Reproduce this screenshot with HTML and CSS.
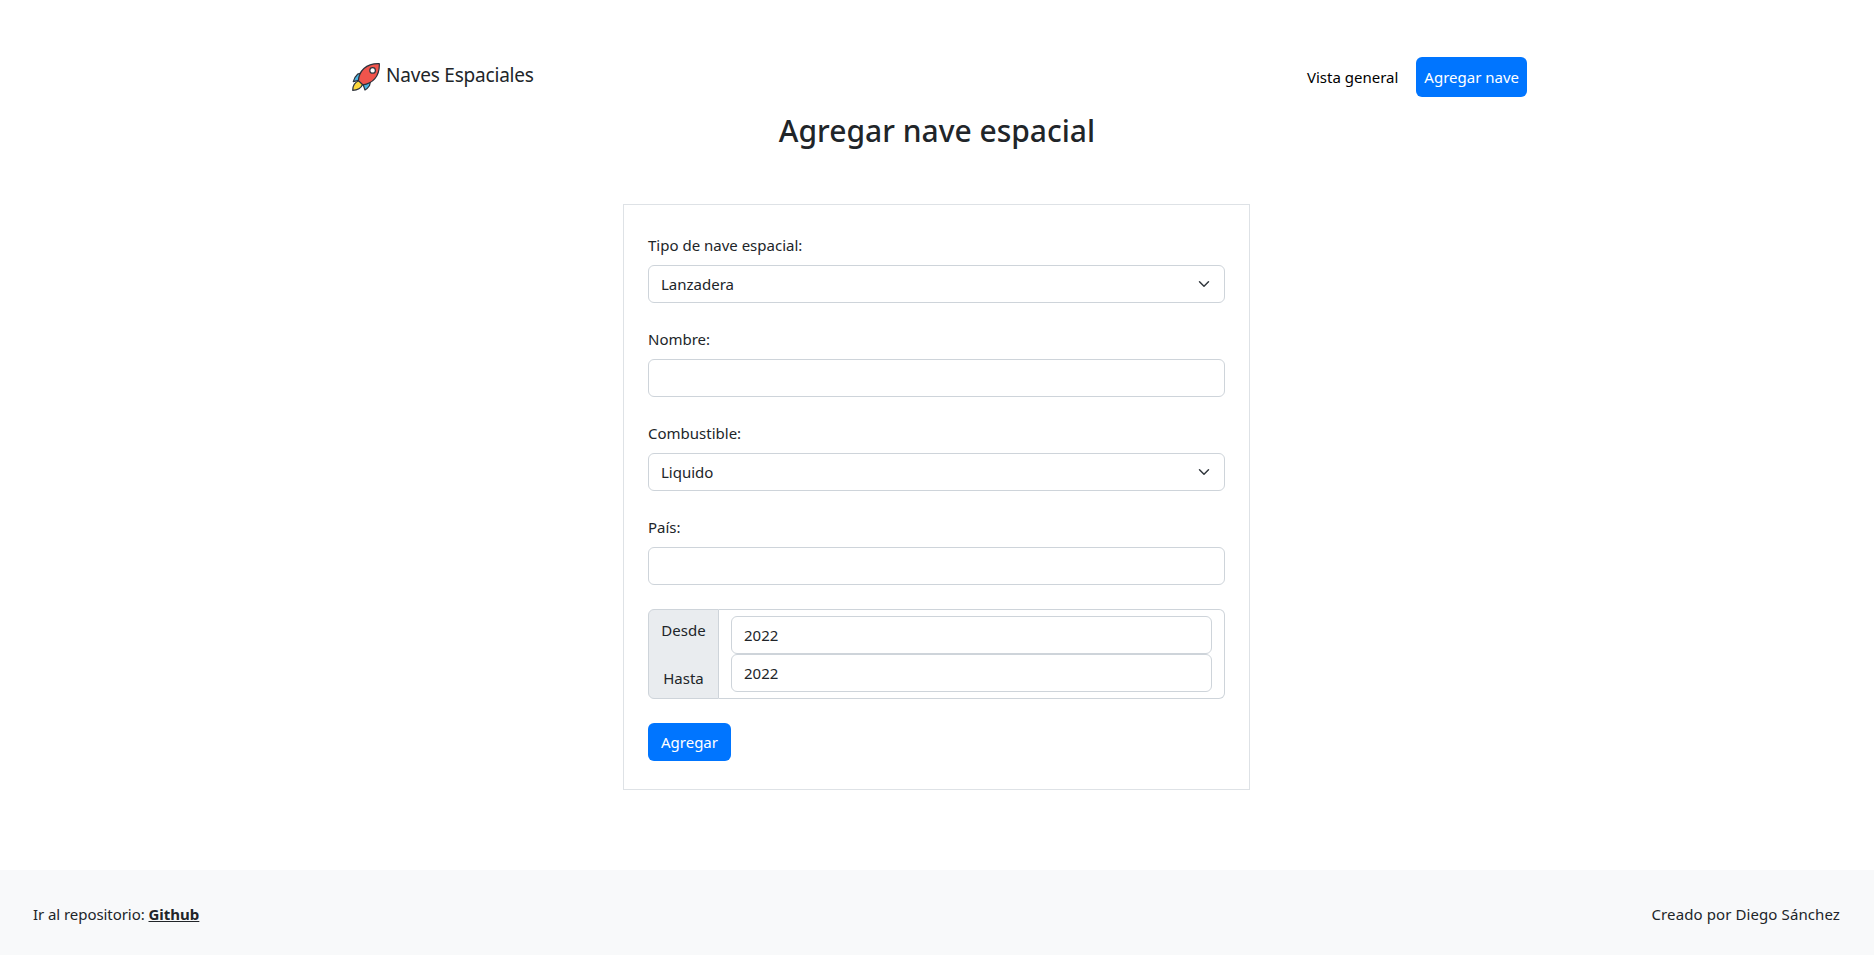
FILE: index.html
```html
<!DOCTYPE html>
<html lang="es">
<head>
  <meta charset="utf-8">
  <title>Naves Espaciales</title>
  <link rel="stylesheet" href="styles.css">
</head>
<body>
  <header class="navbar">
    <a class="brand" href="#">
      <svg class="brand-icon" viewBox="0 0 28 28" stroke="#2b303b" stroke-width="1.2" stroke-linejoin="round" stroke-linecap="round">
        <path d="M9 10.2 5.6 11.2Q2.6 13.8 1.3 18.6L7.6 17.2Z" fill="#4bb3e0"/>
        <path d="M18.4 18.8 17.4 22.8Q15.6 25.6 13 27L10.8 20.6Z" fill="#4bb3e0"/>
        <path d="M7 17.8Q.9 19.8 .7 27.3 8.2 27 10.6 21.4Z" fill="#fbd63b"/>
        <path d="M6.4 17.6C7 8.4 13.6 .3 27.3 .7 27.9 13.4 20.4 20.6 10.8 21.8Z" fill="#f0544c"/>
        <circle cx="20.6" cy="7.4" r="2.8" fill="#fff"/>
      </svg>
      <span class="brand-name">Naves Espaciales</span>
    </a>
    <nav class="nav">
      <a class="nav-link" href="#">Vista general</a>
      <a class="nav-link nav-link-active" href="#">Agregar nave</a>
    </nav>
  </header>

  <main class="main">
    <h1 class="title">Agregar nave espacial</h1>
    <form class="form">
      <label class="field">
        <span class="label">Tipo de nave espacial:</span>
        <select class="control select"><option>Lanzadera</option></select>
      </label>
      <label class="field">
        <span class="label">Nombre:</span>
        <input class="control" type="text">
      </label>
      <label class="field">
        <span class="label">Combustible:</span>
        <select class="control select"><option>Liquido</option></select>
      </label>
      <label class="field">
        <span class="label">País:</span>
        <input class="control" type="text">
      </label>
      <div class="group">
        <div class="group-labels"><span>Desde</span><span>Hasta</span></div>
        <div class="group-inputs">
          <input class="control" type="text" value="2022">
          <input class="control" type="text" value="2022">
        </div>
      </div>
      <button class="submit" type="button">Agregar</button>
    </form>
  </main>

  <footer class="footer">
    <span><span class="repo-label">Ir al repositorio: </span><a class="repo" href="#">Github</a></span>
    <span class="author">Creado por Diego Sánchez</span>
  </footer>
</body>
</html>
```
FILE: styles.css
```css
* { box-sizing: border-box; }

body {
  margin: 0;
  min-height: 955px;
  display: flex;
  flex-direction: column;
  font: 15px/24px "Noto Sans", "Open Sans", sans-serif;
  color: #212529;
  background: #fff;
}

a { color: inherit; text-decoration: none; }

.navbar {
  width: 1180px;
  margin: 57px auto 0;
  padding-left: 5px;
  height: 40px;
  display: flex;
  justify-content: space-between;
  align-items: center;
}

.brand { display: flex; align-items: center; gap: 6px; }
.brand-icon { width: 28px; height: 28px; display: block; }
.brand-name { font-size: 19px; letter-spacing: -0.2px; margin-top: -4px; }

.nav { display: flex; gap: 10px; color: #000; }
.nav-link { padding: 8px; border-radius: 6px; }
.nav-link-active { background: #0075ff; color: #fff; }

.main {
  display: flex;
  flex-direction: column;
  align-items: center;
}

.title {
  margin: 15px 0 54px;
  font-size: 30px;
  font-weight: 500;
  line-height: 38px;
}

.form {
  width: 627px;
  margin-right: 1px;
  padding: 28px 24px;
  border: 1px solid #dee2e6;
  display: flex;
  flex-direction: column;
  align-items: stretch;
  gap: 24px;
}

.field { display: flex; flex-direction: column; gap: 8px; }

.control {
  width: 100%;
  height: 38px;
  margin: 0;
  padding: 6px 12px;
  font: inherit;
  color: inherit;
  background: #fff;
  border: 1px solid #ced4da;
  border-radius: 6px;
}

.select {
  appearance: none;
  background: #fff url("data:image/svg+xml,%3csvg xmlns='http://www.w3.org/2000/svg' viewBox='0 0 16 16'%3e%3cpath fill='none' stroke='%23343a40' stroke-linecap='round' stroke-linejoin='round' stroke-width='2' d='m2 5 6 6 6-6'/%3e%3c/svg%3e") no-repeat right 12px center / 16px 12px;
}

.group { display: flex; height: 90px; }

.group-labels {
  width: 71px;
  padding: 8px 0;
  display: flex;
  flex-direction: column;
  justify-content: space-between;
  align-items: center;
  background: #e9ecef;
  border: 1px solid #ced4da;
  border-radius: 6px 0 0 6px;
}

.group-inputs {
  flex: 1;
  padding: 6px 12px;
  border: 1px solid #ced4da;
  border-left: 0;
  border-radius: 0 6px 6px 0;
}

.group-inputs .control { display: block; }

.submit {
  align-self: flex-start;
  width: 83px;
  height: 38px;
  padding: 0;
  font: inherit;
  color: #fff;
  background: #0075ff;
  border: 0;
  border-radius: 6px;
}

.footer {
  margin-top: auto;
  height: 85px;
  padding: 2px 33px 0;
  display: flex;
  justify-content: space-between;
  align-items: center;
  background: #f8f9fa;
}

.repo-label { letter-spacing: -0.06px; }
.repo { font-weight: 700; text-decoration: underline; }
.author { letter-spacing: 0.1px; margin-right: 1px; }
```
